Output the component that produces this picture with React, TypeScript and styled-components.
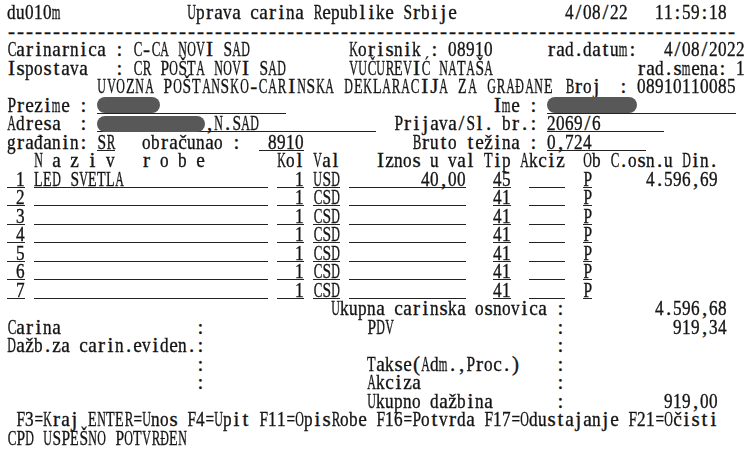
import { useMemo } from "react";
import styled, { createGlobalStyle } from "styled-components";

// 5250-style terminal screen: 24 rows x 82 cells, one serif glyph squeezed into each cell
const FONT = `21px "Liberation Serif"`;
const PITCH = 9;
const GLYPH_MAX = 8.6;

const GlobalStyle = createGlobalStyle`
  html, body {
    margin: 0;
    background: #ffffff;
    overflow: hidden;
  }
`;

const Paper = styled.main`
  padding: 3px 0 0 7px;
  background: #ffffff;
`;

const Screen = styled.div`
  display: flex;
  flex-direction: column;
  font-family: "Liberation Serif", "Times New Roman", serif;
  font-size: 21px;
  color: #141414;
  -webkit-text-stroke: 0.35px #141414;
`;

const Line = styled.div`
  display: grid;
  grid-template-columns: repeat(82, ${PITCH}px);
  height: 18.5px;
  line-height: 18.5px;
`;

const Cell = styled.span<{ $col: number }>`
  grid-row: 1;
  grid-column: ${({ $col }) => $col + 1};
  display: flex;
  justify-content: center;
  min-width: 0;
  white-space: pre;
`;

// a run printed at its own (wider) pitch, like the form title
const Spread = styled.span<{ $col: number; $span: number }>`
  grid-row: 1;
  grid-column: ${({ $col, $span }) => `${$col + 1} / span ${$span}`};
  display: flex;
  min-width: 0;
`;

const SpreadCell = styled.span<{ $w: number }>`
  flex: 0 0 ${({ $w }) => $w}px;
  min-width: 0;
  display: flex;
  justify-content: center;
  white-space: pre;
`;

const Glyph = styled.span`
  display: block;
  flex-shrink: 0;
  transform-origin: center;
`;

const Underline = styled.span<{ $col: number; $span: number }>`
  grid-row: 1;
  grid-column: ${({ $col, $span }) => `${$col + 1} / span ${$span}`};
  border-bottom: 1.4px solid #222;
  margin-bottom: 0.5px;
`;

const Redaction = styled.span<{ $col: number; $span: number }>`
  grid-row: 1;
  grid-column: ${({ $col, $span }) => `${$col + 1} / span ${$span}`};
  margin: 1.5px 0 1px;
  border-radius: 9px;
  background: #585858;
  filter: blur(0.6px);
`;

type Seg = {
  c: number;
  t?: string;
  w?: number;
  u?: boolean;
  r?: boolean;
  p?: number;
};

const item = (n: number, desc: string, cur: string, amount: string, tip: string, base?: string): Seg[] => {
  const segs: Seg[] = [
    { c: 0, w: 2, u: true, t: " " + n },
    { c: 3, w: 26, u: true, t: desc },
    { c: 30, w: 3, u: true, t: "  1" },
    { c: 34, u: true, t: cur },
    { c: 38, w: 13, u: true, t: amount.padStart(13) },
    { c: 54, u: true, t: tip },
    { c: 58, w: 4, u: true, t: "" },
    { c: 64, u: true, t: "P" },
  ];
  if (base) segs.push({ c: 71, t: base });
  return segs;
};

const rows: Seg[][] = [
  [
    { c: 0, t: "du010m" },
    { c: 20, t: "Uprava carina Republike Srbije" },
    { c: 62, t: "4/08/22" },
    { c: 72, t: "11:59:18" },
  ],
  [{ c: 0, t: "-".repeat(81) }],
  [
    { c: 0, t: "Carinarnica : C-CA NOVI SAD" },
    { c: 38, t: "Korisnik : 08910" },
    { c: 60, t: "rad.datum:" },
    { c: 73, t: "4/08/2022" },
  ],
  [
    { c: 0, t: "Ispostava   : CR POŠTA NOVI SAD" },
    { c: 38, t: "VUČUREVIĆ NATAŠA" },
    { c: 70, t: "rad.smena:" },
    { c: 81, t: "1" },
  ],
  [
    { c: 10, t: "UVOZNA POŠTANSKO-CARINSKA DEKLARACIJA ZA GRAĐANE", p: 9.5 },
    { c: 62, t: "Broj  : 08910110085" },
  ],
  [
    { c: 0, t: "Prezime :" },
    { c: 10, w: 21, u: true },
    { c: 10, w: 7, r: true },
    { c: 54, t: "Ime :" },
    { c: 60, w: 21, u: true },
    { c: 60, w: 10, r: true },
  ],
  [
    { c: 0, t: "Adresa  :" },
    { c: 10, w: 31, u: true, t: "            ,N.SAD" },
    { c: 10, w: 12, r: true },
    { c: 43, t: "Prijava/Sl. br.:" },
    { c: 60, w: 13, u: true, t: "2069/6" },
  ],
  [
    { c: 0, t: "građanin:" },
    { c: 10, u: true, t: "SR" },
    { c: 15, t: "obračunao :" },
    { c: 28, w: 5, u: true, t: " 8910" },
    { c: 45, t: "Bruto težina :" },
    { c: 60, w: 11, u: true, t: "0,724" },
  ],
  [
    { c: 3, t: "N a z i v   r o b e" },
    { c: 30, t: "Kol" },
    { c: 34, t: "Val" },
    { c: 41, t: "Iznos u val" },
    { c: 53, t: "Tip" },
    { c: 57, t: "Akciz" },
    { c: 64, t: "Ob" },
    { c: 67, t: "C.osn.u Din." },
  ],
  item(1, "LED SVETLA", "USD", "40,00", "45", "4.596,69"),
  item(2, "", "CSD", "", "41"),
  item(3, "", "CSD", "", "41"),
  item(4, "", "CSD", "", "41"),
  item(5, "", "CSD", "", "41"),
  item(6, "", "CSD", "", "41"),
  item(7, "", "CSD", "", "41"),
  [
    { c: 36, t: "Ukupna carinska osnovica :" },
    { c: 72, t: "4.596,68" },
  ],
  [
    { c: 0, t: "Carina" },
    { c: 21, t: ":" },
    { c: 40, t: "PDV" },
    { c: 61, t: ":" },
    { c: 74, t: "919,34" },
  ],
  [
    { c: 0, t: "Dažb.za carin.eviden.:" },
    { c: 61, t: ":" },
  ],
  [
    { c: 21, t: ":" },
    { c: 40, t: "Takse(Adm.,Proc.)" },
    { c: 61, t: ":" },
  ],
  [
    { c: 21, t: ":" },
    { c: 40, t: "Akciza" },
    { c: 61, t: ":" },
  ],
  [
    { c: 40, t: "Ukupno dažbina" },
    { c: 61, t: ":" },
    { c: 73, t: "919,00" },
  ],
  [{ c: 1, t: "F3=Kraj ENTER=Unos F4=Upit F11=OpisRobe F16=Potvrda F17=Odustajanje F21=Očisti" }],
  [{ c: 0, t: "CPD USPEŠNO POTVRĐEN" }],
];

// how much each glyph has to be squeezed to fit its cell
function useSqueeze() {
  return useMemo(() => {
    const ctx = document.createElement("canvas").getContext("2d");
    const cache = new Map<string, number>();
    return (ch: string) => {
      let k = cache.get(ch);
      if (k === undefined) {
        let w = 10.5;
        if (ctx) {
          ctx.font = FONT;
          w = ctx.measureText(ch).width || w;
        }
        k = Math.min(1, GLYPH_MAX / w);
        cache.set(ch, k);
      }
      return k;
    };
  }, []);
}

export default function App() {
  const squeeze = useSqueeze();
  const glyph = (ch: string) => <Glyph style={{ transform: `scaleX(${squeeze(ch)})` }}>{ch}</Glyph>;

  return (
    <>
      <GlobalStyle />
      <Paper>
        <Screen>
          {rows.map((segs, r) => (
            <Line key={r}>
              {segs
                .filter((s) => s.u)
                .map((s, i) => (
                  <Underline key={`u${i}`} $col={s.c} $span={s.w ?? (s.t ?? "").length} />
                ))}
              {segs
                .filter((s) => !s.r && s.t)
                .flatMap((s, i) => {
                  const chars = Array.from(s.t as string);
                  if (s.p) {
                    const pitch = s.p;
                    return [
                      <Spread key={`s${i}`} $col={s.c} $span={Math.ceil((chars.length * pitch) / PITCH)}>
                        {chars.map((ch, j) => (
                          <SpreadCell key={j} $w={pitch}>
                            {ch === " " ? null : glyph(ch)}
                          </SpreadCell>
                        ))}
                      </Spread>,
                    ];
                  }
                  return chars.map((ch, j) =>
                    ch === " " ? null : (
                      <Cell key={`c${i}-${j}`} $col={s.c + j}>
                        {glyph(ch)}
                      </Cell>
                    )
                  );
                })}
              {segs
                .filter((s) => s.r)
                .map((s, i) => (
                  <Redaction key={`r${i}`} $col={s.c} $span={s.w ?? 1} />
                ))}
            </Line>
          ))}
        </Screen>
      </Paper>
    </>
  );
}
